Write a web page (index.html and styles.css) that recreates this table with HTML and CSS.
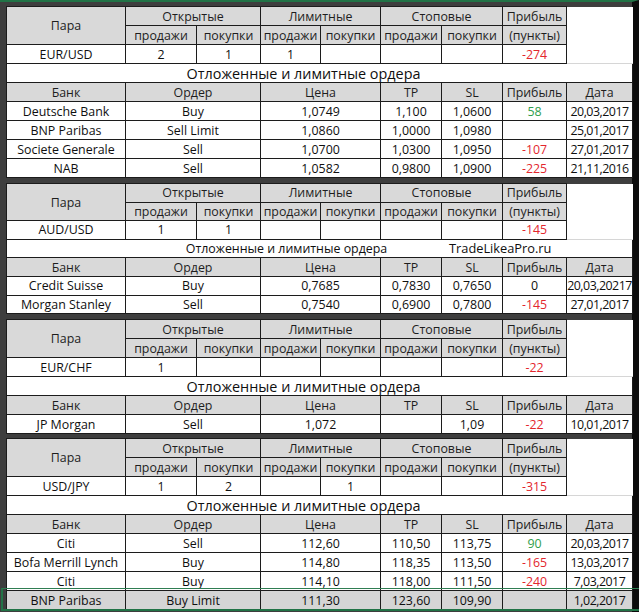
FILE: index.html
```html
<!DOCTYPE html>
<html lang="ru">
<head>
<meta charset="utf-8">
<title>Позиции банков</title>
<link rel="stylesheet" href="styles.css">
</head>
<body>
<div class="sheet">

<table class="grid">
<colgroup><col class="c1"><col class="c2"><col class="c3"><col class="c4"><col class="c5"><col class="c6"><col class="c7"><col class="c8"><col class="c9"></colgroup>
<tr><th rowspan="2">Пара</th><th colspan="2">Открытые</th><th colspan="2">Лимитные</th><th colspan="2">Стоповые</th><th>Прибыль</th><td class="blank"></td></tr>
<tr><th>продажи</th><th>покупки</th><th>продажи</th><th>покупки</th><th>продажи</th><th>покупки</th><th>(пункты)</th><td class="blank"></td></tr>
<tr><td>EUR/USD</td><td>2</td><td>1</td><td>1</td><td></td><td></td><td></td><td class="neg">-274</td><td class="blank last"></td></tr>
<tr><td colspan="9" class="otl">Отложенные и лимитные ордера</td></tr>
<tr><th>Банк</th><th colspan="2">Ордер</th><th colspan="2">Цена</th><th>TP</th><th>SL</th><th>Прибыль</th><th>Дата</th></tr>
<tr><td>Deutsche Bank</td><td colspan="2">Buy</td><td colspan="2">1,0749</td><td>1,100</td><td>1,0600</td><td class="pos">58</td><td class="dt">20,03,2017</td></tr>
<tr><td>BNP Paribas</td><td colspan="2">Sell Limit</td><td colspan="2">1,0860</td><td>1,0000</td><td>1,0980</td><td></td><td class="dt">25,01,2017</td></tr>
<tr><td>Societe Generale</td><td colspan="2">Sell</td><td colspan="2">1,0700</td><td>1,0300</td><td>1,0950</td><td class="neg">-107</td><td class="dt">27,01,2017</td></tr>
<tr><td>NAB</td><td colspan="2">Sell</td><td colspan="2">1,0582</td><td>0,9800</td><td>1,0900</td><td class="neg">-225</td><td class="dt">21,11,2016</td></tr>
</table>

<table class="grid compact">
<colgroup><col class="c1"><col class="c2"><col class="c3"><col class="c4"><col class="c5"><col class="c6"><col class="c7"><col class="c8"><col class="c9"></colgroup>
<tr><th rowspan="2">Пара</th><th colspan="2">Открытые</th><th colspan="2">Лимитные</th><th colspan="2">Стоповые</th><th>Прибыль</th><td class="blank"></td></tr>
<tr><th>продажи</th><th>покупки</th><th>продажи</th><th>покупки</th><th>продажи</th><th>покупки</th><th>(пункты)</th><td class="blank"></td></tr>
<tr><td>AUD/USD</td><td>1</td><td>1</td><td></td><td></td><td></td><td></td><td class="neg">-145</td><td class="blank last"></td></tr>
<tr><td colspan="9" class="otl otl-small">Отложенные и лимитные ордера<span class="wm">TradeLikeaPro.ru</span></td></tr>
<tr><th>Банк</th><th colspan="2">Ордер</th><th colspan="2">Цена</th><th>TP</th><th>SL</th><th>Прибыль</th><th>Дата</th></tr>
<tr><td>Credit Suisse</td><td colspan="2">Buy</td><td colspan="2">0,7685</td><td>0,7830</td><td>0,7650</td><td>0</td><td class="dt">20,03,20217</td></tr>
<tr><td>Morgan Stanley</td><td colspan="2">Sell</td><td colspan="2">0,7540</td><td>0,6900</td><td>0,7800</td><td class="neg">-145</td><td class="dt">27,01,2017</td></tr>
</table>

<table class="grid">
<colgroup><col class="c1"><col class="c2"><col class="c3"><col class="c4"><col class="c5"><col class="c6"><col class="c7"><col class="c8"><col class="c9"></colgroup>
<tr><th rowspan="2">Пара</th><th colspan="2">Открытые</th><th colspan="2">Лимитные</th><th colspan="2">Стоповые</th><th>Прибыль</th><td class="blank"></td></tr>
<tr><th>продажи</th><th>покупки</th><th>продажи</th><th>покупки</th><th>продажи</th><th>покупки</th><th>(пункты)</th><td class="blank"></td></tr>
<tr><td>EUR/CHF</td><td>1</td><td></td><td></td><td></td><td></td><td></td><td class="neg">-22</td><td class="blank last"></td></tr>
<tr><td colspan="9" class="otl">Отложенные и лимитные ордера</td></tr>
<tr><th>Банк</th><th colspan="2">Ордер</th><th colspan="2">Цена</th><th>TP</th><th>SL</th><th>Прибыль</th><th>Дата</th></tr>
<tr><td>JP Morgan</td><td colspan="2">Sell</td><td colspan="2">1,072</td><td></td><td>1,09</td><td class="neg">-22</td><td class="dt">10,01,2017</td></tr>
</table>

<table class="grid last-table">
<colgroup><col class="c1"><col class="c2"><col class="c3"><col class="c4"><col class="c5"><col class="c6"><col class="c7"><col class="c8"><col class="c9"></colgroup>
<tr><th rowspan="2">Пара</th><th colspan="2">Открытые</th><th colspan="2">Лимитные</th><th colspan="2">Стоповые</th><th>Прибыль</th><td class="blank"></td></tr>
<tr><th>продажи</th><th>покупки</th><th>продажи</th><th>покупки</th><th>продажи</th><th>покупки</th><th>(пункты)</th><td class="blank"></td></tr>
<tr><td>USD/JPY</td><td>1</td><td>2</td><td></td><td>1</td><td></td><td></td><td class="neg">-315</td><td class="blank last"></td></tr>
<tr><td colspan="9" class="otl">Отложенные и лимитные ордера</td></tr>
<tr><th>Банк</th><th colspan="2">Ордер</th><th colspan="2">Цена</th><th>TP</th><th>SL</th><th>Прибыль</th><th>Дата</th></tr>
<tr><td>Citi</td><td colspan="2">Sell</td><td colspan="2">112,60</td><td>110,50</td><td>113,75</td><td class="pos">90</td><td class="dt">20,03,2017</td></tr>
<tr><td>Bofa Merrill Lynch</td><td colspan="2">Buy</td><td colspan="2">114,80</td><td>118,35</td><td>113,50</td><td class="neg">-165</td><td class="dt">13,03,2017</td></tr>
<tr><td>Citi</td><td colspan="2">Buy</td><td colspan="2">114,10</td><td>118,00</td><td>111,50</td><td class="neg">-240</td><td class="dt">7,03,2017</td></tr>
<tr class="grey"><td>BNP Paribas</td><td colspan="2">Buy Limit</td><td colspan="2">111,30</td><td>123,60</td><td>109,90</td><td></td><td class="dt">1,02,2017</td></tr>
</table>

<div class="selection"></div>
</div>
</body>
</html>
```

FILE: styles.css
```css
* { box-sizing: border-box; }
html, body { margin: 0; padding: 0; }
body {
  width: 640px;
  height: 612px;
  overflow: hidden;
  background: #ffffff;
}
.sheet {
  position: relative;
  width: 639px;
  height: 612px;
  background: #3e3e3e;
  border-top: 2px solid #217346;
  border-right: 7px solid #0c0c0c;
  padding: 4px 0 0 6px;
  display: flex;
  flex-direction: column;
  gap: 5px;
}
.grid {
  width: 626px;
  flex: none;
  table-layout: fixed;
  border-collapse: collapse;
  font-family: "Open Sans", "Liberation Sans", sans-serif;
  font-size: 12.4px;
  color: #0f0f0f;
}
.grid.last-table { margin-top: -1px; }
.c1 { width: 119px; }
.c2 { width: 71px; }
.c3 { width: 64px; }
.c4 { width: 60px; }
.c5 { width: 60px; }
.c6 { width: 61px; }
.c7 { width: 61px; }
.c8 { width: 64px; }
.c9 { width: 66px; }
.grid td, .grid th {
  border: 1px solid #1c1c1c;
  height: 19px;
  padding: 0;
  line-height: 17px;
  text-align: center;
  white-space: nowrap;
  font-weight: 400;
  background: #ffffff;
  overflow: visible;
}
.grid.compact td, .grid.compact th {
  height: 18.6px;
}
.grid th {
  background: #d9d9d9;
  color: #1e1e1e;
}
.grid td.dt {
  letter-spacing: -0.5px;
}
.grid td.blank {
  border: none;
  background: #ffffff;
}
.grid td.blank.last {
  border-bottom: 1px solid #d6d6d6;
}
.grid td.otl {
  font-size: 14.4px;
  padding-right: 32px;
  position: relative;
}
.grid td.otl-small {
  font-size: 12.4px;
  padding-right: 66px;
}
.wm {
  position: absolute;
  left: 442px;
  top: -1px;
  font-size: 12.8px;
  line-height: 19px;
  color: #0f0f0f;
}
.neg { color: #e3262d; }
.pos { color: #2f9e4c; }
.grid tr.grey td { background: #d5d5d5; }
.selection {
  position: absolute;
  left: 1px;
  top: 586px;
  width: 638px;
  height: 23px;
  border-top: 1px solid #2f7d52;
  border-bottom: 2px solid #217346;
  border-left: 2px solid #217346;
  pointer-events: none;
}
```
